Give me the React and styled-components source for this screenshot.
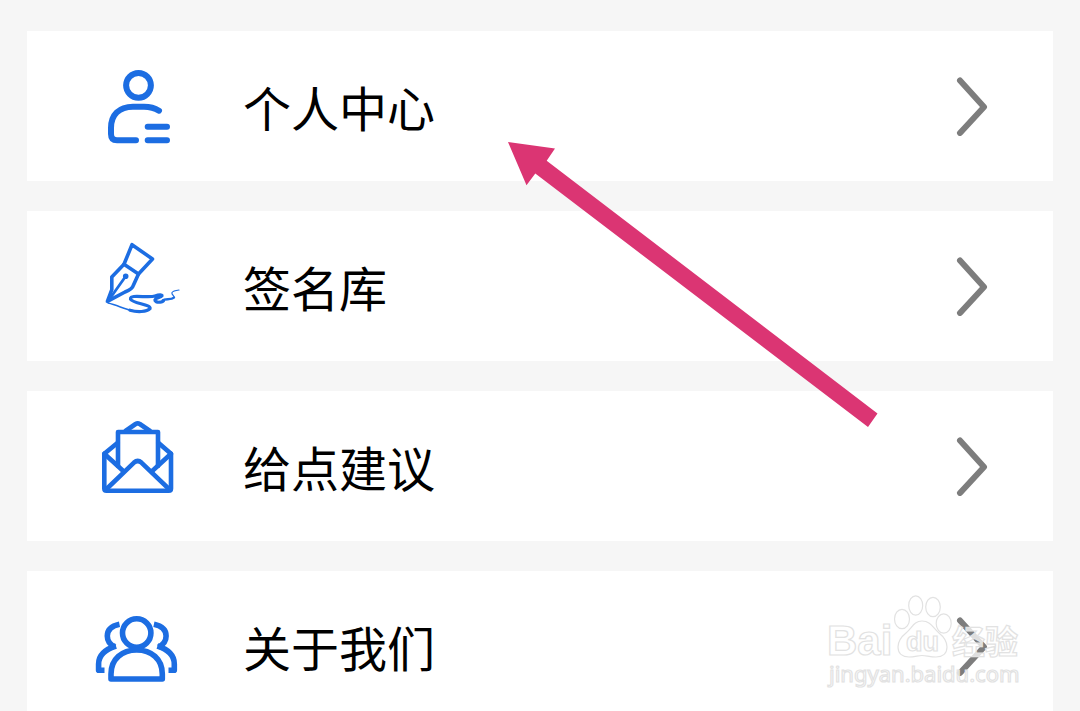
import React from "react";
import styled, { createGlobalStyle } from "styled-components";

const GlobalStyle = createGlobalStyle`
  *, *::before, *::after { box-sizing: border-box; }
  body {
    margin: 0;
    background: #f6f6f6;
    font-family: "Noto Sans CJK SC", "Noto Sans", sans-serif;
  }
`;

const Page = styled.main`
  position: relative;
  height: 100vh;
  overflow: hidden;
  padding: 31px 27px 0;
  background: #f6f6f6;
`;

const Menu = styled.ul`
  display: flex;
  flex-direction: column;
  gap: 30px;
  margin: 0;
  padding: 0;
  list-style: none;
`;

const MenuLink = styled.a`
  display: flex;
  align-items: center;
  gap: 56px;
  height: 150px;
  padding: 0 63px 0 60px;
  background: #ffffff;
  color: #000000;
  text-decoration: none;
`;

const Icon = styled.svg`
  flex: none;
  width: 100px;
  height: 100px;
  fill: none;
  stroke: #1c6de2;
  stroke-width: ${(p) => p.$weight || 6};
  stroke-linecap: round;
  stroke-linejoin: round;
`;

const Label = styled.span`
  flex: 1;
  font-size: 48px;
  line-height: 72px;
`;

const Chevron = styled.svg`
  flex: none;
  width: 36px;
  height: 60px;
  fill: none;
  stroke: #7d7d7d;
  stroke-width: 6;
  stroke-linecap: round;
  stroke-linejoin: round;
`;

const Pointer = styled.svg`
  position: absolute;
  left: 508px;
  top: 142px;
  width: 370px;
  height: 286px;
  fill: #db3573;
  pointer-events: none;
`;

const Watermark = styled.svg`
  position: absolute;
  right: 50px;
  bottom: 11px;
  width: 210px;
  height: 110px;
  fill: rgba(255, 255, 255, 0.75);
  stroke: #e2e2e2;
  stroke-width: 1.2;
  pointer-events: none;
`;

const MarkText = styled.text`
  font-family: "Liberation Sans", "Noto Sans CJK SC", sans-serif;
  font-size: ${(p) => p.$size}px;
  font-weight: 700;
`;

const MarkUrl = styled.text`
  font-family: "Noto Sans", sans-serif;
  font-size: 22px;
`;

const ProfileIcon = () => (
  <Icon viewBox="0 0 100 100" aria-hidden="true">
    <circle cx="51.5" cy="29.3" r="12.4" />
    <path d="M72 54.7C67 51.5 63 50.7 57 50.7H46C32 50.7 24 59 24 72V78C24 82 26 84.3 30 84.3H49" />
    <path d="M60.7 70.7H80M60.7 84.3H80" />
  </Icon>
);

const SignatureIcon = () => (
  <Icon viewBox="0 0 100 100" $weight={3.6} aria-hidden="true">
    <path d="M45 8.7L65.5 23L51.5 38L37 28.3Z" />
    <path d="M37 28.3L24.8 41V53.7L20.4 65.3L38 56C42 54.5 45.5 52.5 46.5 49L51.5 38" />
    <path d="M38.7 40.3L21.5 64.5" strokeWidth="2.8" />
    <circle cx="38.7" cy="40.3" r="1" />
    <path d="M21 67C30 69 37 73 45 74.6" strokeWidth="1.5" />
    <path d="M43 74.2C50 76.3 60 76 63 72.7C65 68.5 46 67.5 43.5 63.2C42.5 57.5 61 62.5 68 60C72 58.6 75.5 58.6 75 59.8C73.5 62 67 61.8 68 64.6C69.5 67.5 77 66 76.5 64.6" strokeWidth="3.2" />
    <path d="M75.5 64.5C78 62 84 64.5 87 61.5" strokeWidth="2.4" />
    <path d="M87 61.8C88 59.5 84 59 85 56.5C86 54.8 89 54.4 92 54" strokeWidth="1.2" />
  </Icon>
);

const LetterIcon = () => (
  <Icon viewBox="0 0 100 100" $weight={4.6} aria-hidden="true">
    <path d="M30.7 26.7L17.3 37.8V72.5Q17.3 74.7 19.5 74.7H81.8Q84 74.7 84 72.5V37.8L71.3 26.7" />
    <path d="M31 50V16H71V50" />
    <path d="M38.5 15L48.6 8Q50.7 6.7 52.8 8L63 15" />
    <path d="M17.3 37.8L36 54.7M84 37.8L65.5 54.7" />
    <path d="M19 73.5L47 46.6Q50.7 43.4 54.4 46.6L82.5 73.5" />
  </Icon>
);

const PeopleIcon = () => (
  <Icon viewBox="0 0 100 100" $weight={5.6} aria-hidden="true">
    <circle cx="49.7" cy="37" r="14.2" />
    <path d="M24 83V78C24 63 35 54 49.7 54S75.3 63 75.3 78V83Z" />
    <g strokeLinecap="butt">
      <path d="M32.5 28.2C24 30 20.3 34.5 20.3 40C20.3 45 23 48.7 28 51.2" />
      <path d="M29 50C18 53.5 11.6 60 11.6 68V74.2H17.5" />
      <path d="M66.9 28.2C75.4 30 79.1 34.5 79.1 40C79.1 45 76.4 48.7 71.4 51.2" />
      <path d="M70.4 50C81.4 53.5 87.3 60 87.3 68V74.2H81.5" />
    </g>
  </Icon>
);

const items = [
  { id: "profile", label: "个人中心", Glyph: ProfileIcon },
  { id: "signatures", label: "签名库", Glyph: SignatureIcon },
  { id: "feedback", label: "给点建议", Glyph: LetterIcon },
  { id: "about", label: "关于我们", Glyph: PeopleIcon },
];

export default function App() {
  return (
    <>
      <GlobalStyle />
      <Page>
        <nav>
          <Menu>
            {items.map(({ id, label, Glyph }) => (
              <li key={id}>
                <MenuLink href={`#${id}`}>
                  <Glyph />
                  <Label>{label}</Label>
                  <Chevron viewBox="0 0 36 60" aria-hidden="true">
                    <path d="M6 4.5L30 31L6 57" />
                  </Chevron>
                </MenuLink>
              </li>
            ))}
          </Menu>
        </nav>
        <Pointer viewBox="0 0 370 286" aria-hidden="true">
          <path d="M0 0L47 6.5L38.7 18.7L369.5 271.5L360 285L27.3 31.5L18.5 43.3Z" />
        </Pointer>
        <Watermark viewBox="0 0 210 110" aria-hidden="true">
          <MarkText x="7" y="65" $size={42}>Bai</MarkText>
          <ellipse cx="82" cy="29" rx="7.5" ry="9.7" />
          <ellipse cx="95.7" cy="15.5" rx="7" ry="9.7" />
          <ellipse cx="113" cy="17" rx="7.3" ry="9.7" />
          <ellipse cx="123.7" cy="33.5" rx="7.5" ry="9.7" />
          <path d="M102 31C94 31 92 38 86 43C81 47 78 51 78 57C78 64 83 67 89 67C95 67 98 65.5 102 65.5S110 67 116 67C122 67 127 64 127 57C127 51 124 47 119 43C113 38 111 31 102 31Z" />
          <MarkText x="86" y="61" $size={27}>du</MarkText>
          <MarkText x="132" y="64" $size={33}>经验</MarkText>
          <MarkUrl x="9" y="92">jingyan.baidu.com</MarkUrl>
        </Watermark>
      </Page>
    </>
  );
}
